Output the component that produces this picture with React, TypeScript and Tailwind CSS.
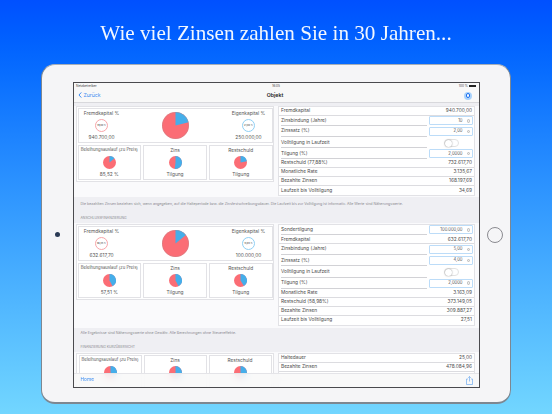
const F = "font-['Inter','Liberation_Sans',sans-serif]";

function Pie({ size, share, border = false }: { size: number; share: number; border?: boolean }) {
  const r = 50;
  const a = (share / 100) * Math.PI * 2;
  const x = 50 + r * Math.sin(a);
  const y = 50 - r * Math.cos(a);
  const large = share > 50 ? 1 : 0;
  return (
    <svg width={size} height={size} viewBox="0 0 100 100" className="block shrink-0">
      <circle cx="50" cy="50" r="50" fill="#fb6d75" />
      <path d={`M50 50 L50 0 A50 50 0 ${large} 1 ${x} ${y} Z`} fill="#45aeea" />
      {border && <circle cx="50" cy="50" r="49" fill="none" stroke="#999" strokeWidth="1" />}
    </svg>
  );
}

function Ring({ color, label }: { color: string; label: string }) {
  return (
    <div
      className={`flex h-[13px] w-[13px] items-center justify-center rounded-full border bg-white text-[2.3px] font-medium whitespace-nowrap text-[#444] ${color}`}
    >
      {label}
    </div>
  );
}

function Mini({ top, share, bottom, small }: { top: string; share: number; bottom: string; small?: boolean }) {
  return (
    <div className="flex h-[35px] flex-1 flex-col items-center border border-[#e2e2e6] bg-white pt-[1px]">
      <div className={`${small ? "text-[4.25px]" : "text-[4.8px]"} leading-[6px] whitespace-nowrap text-[#555]`}>{top}</div>
      <div className="mt-[3px] mb-[2px]">
        <Pie size={13} share={share} />
      </div>
      <div className="text-[4.8px] leading-[6px] text-[#555]">{bottom}</div>
    </div>
  );
}

function Side({ title, ring, value }: { title: string; ring: React.ReactNode; value: string }) {
  return (
    <div className="flex w-[40px] flex-col items-center text-[4.8px] leading-[6px] text-[#555]">
      <div className="whitespace-nowrap">{title}</div>
      <div className="mt-[3px] mb-[2px]">{ring}</div>
      <div>{value}</div>
    </div>
  );
}

function Cards({
  a,
  b,
  aL,
  bL,
  big,
  minis,
}: {
  a: string;
  b: string;
  aL: string;
  bL: string;
  big: number;
  minis: [number, string, number, number];
}) {
  return (
    <div className="flex h-[76px] flex-col gap-[2.5px] border border-[#e2e2e6] bg-white p-[0.5px]">
      <div className="flex h-[35px] items-center justify-between border border-[#e2e2e6] px-[3px]">
        <Side title="Fremdkapital %" ring={<Ring color="border-[#f8a5a9]" label={aL} />} value={a} />
        <Pie size={27} share={big} border />
        <Side title="Eigenkapital %" ring={<Ring color="border-[#8fd0f5]" label={bL} />} value={b} />
      </div>
      <div className="flex gap-[2px]">
        <Mini top="Beleihungsauslauf (zu Preis)" share={minis[0]} bottom={minis[1]} small />
        <Mini top="Zins" share={minis[2]} bottom="Tilgung" />
        <Mini top="Restschuld" share={minis[3]} bottom="Tilgung" />
      </div>
    </div>
  );
}

function Row({ label, value, last }: { label: string; value: string; last?: boolean }) {
  return (
    <div
      className={`flex h-[9px] items-center justify-between px-[2px] text-[4.8px] text-[#4a4a4a] ${
        last ? "" : "border-b border-[#dcdce0]"
      }`}
    >
      <span>{label}</span>
      <span>{value}</span>
    </div>
  );
}

function Input({ label, value, tall }: { label: string; value: string; tall?: boolean }) {
  return (
    <div className={`flex items-center gap-[2px] pl-[2px] text-[4.8px] text-[#4a4a4a] ${tall ? "h-[11.5px]" : "h-[10.7px]"}`}>
      <div className="flex h-full flex-1 items-center border-b border-[#d2d2d6]">{label}</div>
      <div className="mr-[1px] flex h-[9px] w-[44.5px] items-center justify-end rounded-[1px] border border-[#bcdcf8] bg-white pr-[2px] text-[4.2px] text-[#555]">
        <span>{value}</span>
        <span className="ml-[4px] h-[3.5px] w-[3.5px] rounded-full border border-[#bbb] bg-[#eee]" />
      </div>
    </div>
  );
}

function Toggle({ label }: { label: string }) {
  return (
    <div className="flex h-[11.5px] items-center gap-[2px] pl-[2px] text-[4.8px] text-[#4a4a4a]">
      <div className="flex h-full flex-1 items-center border-b border-[#d2d2d6]">{label}</div>
      <div className="mr-[1px] flex w-[44.5px] items-center pl-[15px]">
        <div className="h-[8px] w-[15px] rounded-full border border-[#e2e2e2] bg-white">
          <div className="h-[7px] w-[7px] rounded-full bg-white shadow-[0_0_1.5px_#777]" />
        </div>
      </div>
    </div>
  );
}

function Band({ note, head, pt }: { note: string; head: string; pt: string }) {
  return (
    <div className={`bg-[#efeff3] pl-[6.5px] ${pt}`}>
      <div className="text-[3.6px] leading-[8px] whitespace-nowrap text-[#8a8a8f]">{note}</div>
      <div className="pt-[7px] pb-[2px] text-[3.4px] leading-[6px] text-[#8a8a8f]">{head}</div>
    </div>
  );
}

export default function App() {
  return (
    <div className={`flex h-[414px] w-[552px] flex-col items-center overflow-hidden bg-gradient-to-b from-[#0050ff] to-[#72d6ff] ${F}`}>
      <h1 className="mt-[18px] h-[46px] text-[21.15px] leading-[30px] text-[#f2f7ff] blur-[0.2px] font-['Liberation_Serif',serif]">
        Wie viel Zinsen zahlen Sie in 30 Jahren...
      </h1>
      <div className="flex h-[340px] w-[470px] shrink-0 items-center rounded-[14px] border border-b-2 border-[#7d8791] border-t-[#a5aeb8] bg-[#f5f5f7] pt-[2px]">
        <div className="flex w-[31px] justify-center">
          <div className="h-[5px] w-[5px] rounded-full bg-[#2a3a55]" />
        </div>
        <div className="relative flex h-[306px] w-[407px] shrink-0 flex-col overflow-hidden border border-[#4a4a4e] bg-[#efeff3] blur-[0.25px]">
          <div className="flex h-[7px] shrink-0 items-center justify-between bg-[#f8f8f8] pt-[1px] pr-[3px] pl-[2px] text-[3.2px] text-[#444]">
            <span className="w-[50px]">Netzbetreiber</span>
            <span>16:05</span>
            <span className="flex w-[50px] items-center justify-end gap-[1px]">
              100 %<span className="h-[2px] w-[7px] bg-[#222]" />
            </span>
          </div>
          <div className="flex h-[13px] shrink-0 items-center justify-between border-b border-[#d8d8dc] bg-[#f8f8f8] pr-[7px] pl-[4px]">
            <div className="flex w-[50px] items-center gap-[1.5px] text-[5.2px] text-[#3a8bf0]">
              <svg width="4" height="6" viewBox="0 0 4 7" fill="none" stroke="#1f7cf2" strokeWidth="1">
                <path d="M3.5 .5 L.8 3.5 L3.5 6.5" />
              </svg>
              Zurück
            </div>
            <div className="text-[5.2px] font-semibold text-[#222]">Objekt</div>
            <div className="flex w-[50px] justify-end">
              <div className="flex h-[8px] w-[8px] items-center justify-center rounded-full bg-[#a9d2fb]">
                <div className="h-[4.5px] w-[4.5px] rounded-full border-[1.5px] border-[#1b6ff0] bg-white" />
              </div>
            </div>
          </div>
          <div className="flex flex-1 flex-col overflow-hidden pt-[3px]">
            <div className="flex h-[91px] shrink-0 gap-[4px] bg-[#fafafc] pl-[2px]">
              <div className="mt-[0.5px] w-[198px] shrink-0">
                <Cards a="940.700,00" b="250.000,00" aL="79,00 %" bL="21,00 %" big={21} minis={[14, "85,52 %", 52, 22]} />
              </div>
              <div className="h-[90px] w-[197px] shrink-0 border border-[#e2e2e6] bg-white">
                <Row label="Fremdkapital" value="940.700,00" />
                <Input label="Zinsbindung (Jahre)" value="10" />
                <Input label="Zinssatz (%)" value="2,00" />
                <Toggle label="Volltilgung in Laufzeit" />
                <Input label="Tilgung (%)" value="2,0000" />
                <Row label="Restschuld (77,88%)" value="732.617,70" />
                <Row label="Monatliche Rate" value="3.135,67" />
                <Row label="Bezahlte Zinsen" value="168.197,69" />
                <Row label="Laufzeit bis Volltilgung" value="34,69" last />
              </div>
            </div>
            <Band
              pt="pt-[3px]"
              note="Die bezahlten Zinsen beziehen sich, wenn angegeben, auf die Halteperiode bzw. die Zinsfestschreibungsdauer. Die Laufzeit bis zur Volltilgung ist informativ. Alle Werte sind Näherungswerte."
              head="ANSCHLUSSFINANZIERUNG"
            />
            <div className="flex h-[105px] shrink-0 gap-[4px] bg-[#fafafc] pt-[1px] pl-[2px]">
              <div className="mt-[0.5px] w-[198px] shrink-0">
                <Cards a="632.617,70" b="100.000,00" aL="86,35 %" bL="13,65 %" big={14} minis={[42, "57,51 %", 42, 41]} />
              </div>
              <div className="h-[102px] w-[197px] shrink-0 border border-[#e2e2e6] bg-white">
                <Input label="Sondertilgung" value="100.000,00" />
                <Row label="Fremdkapital" value="632.617,70" />
                <Input label="Zinsbindung (Jahre)" value="5,00" />
                <Input label="Zinssatz (%)" value="4,00" tall />
                <Toggle label="Volltilgung in Laufzeit" />
                <Input label="Tilgung (%)" value="2,0000" />
                <Row label="Monatliche Rate" value="3.163,09" />
                <Row label="Restschuld (58,98%)" value="373.149,05" />
                <Row label="Bezahlte Zinsen" value="309.887,27" />
                <Row label="Laufzeit bis Volltilgung" value="27,51" last />
              </div>
            </div>
            <Band
              pt="pt-[1px]"
              note="Alle Ergebnisse sind Näherungswerte ohne Gewähr. Alle Berechnungen ohne Steuereffekte."
              head="FINANZIERUNG KURZÜBERSICHT"
            />
            <div className="flex flex-1 gap-[4px] bg-[#fafafc] pt-[1px] pl-[2px]">
              <div className="h-[50px] w-[198px] shrink-0 border border-[#e2e2e6] bg-white p-[1.5px]">
                <div className="flex gap-[2px]">
                  <Mini top="Beleihungsauslauf (zu Preis)" share={40} bottom="" small />
                  <Mini top="Zins" share={50} bottom="" />
                  <Mini top="Restschuld" share={50} bottom="" />
                </div>
              </div>
              <div className="h-[50px] w-[197px] shrink-0 border border-[#e2e2e6] bg-white">
                <Row label="Haltedauer" value="25,00" />
                <Row label="Bezahlte Zinsen" value="478.084,96" />
                <Row label="" value="" />
              </div>
            </div>
          </div>
          <div className="absolute inset-x-0 bottom-0 flex h-[14px] items-center justify-between border-t border-[#e4e4e8] bg-[#f8f8f8]/85 px-[6.5px] text-[4.8px] text-[#3a8bf0] backdrop-blur-[4px]">
            <span>Home</span>
            <svg width="7" height="9" viewBox="0 0 7 9" fill="none" stroke="#5aa0ef" strokeWidth=".6">
              <path d="M2 3 H.5 V8.5 H6.5 V3 H5 M3.5 5.5 V.5 M2.2 1.8 L3.5 .5 L4.8 1.8" />
            </svg>
          </div>
        </div>
        <div className="flex flex-1 justify-center">
          <div className="h-[16px] w-[16px] rounded-full border border-[#8a8a90] bg-[#f5f5f7]" />
        </div>
      </div>
    </div>
  );
}
